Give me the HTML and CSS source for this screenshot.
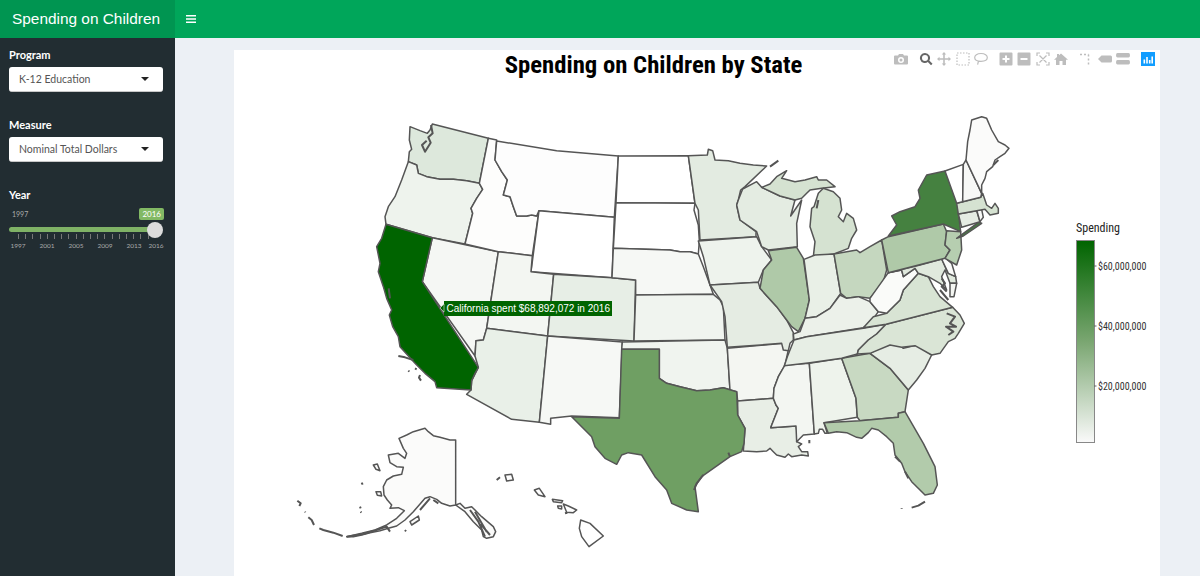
FILE: index.html
```html
<!DOCTYPE html>
<html lang="en">
<head>
    <meta charset="UTF-8">
    <title>Spending on Children</title>
    <link rel="stylesheet" href="styles.css">
</head>
<body>
    <header class="topbar">
        <div class="brand">Spending on Children</div>
        <div class="toggle">
            <svg width="10" height="8" viewBox="0 0 10 8"><path d="M0,0H10V1.6H0ZM0,3.2H10V4.8H0ZM0,6.4H10V8H0Z" fill="#fff"/></svg>
        </div>
    </header>
    <div class="wrap">
        <aside class="sidebar">
            <div class="field">
                <label class="field-label">Program</label>
                <div class="select">K-12 Education<span class="caret"></span></div>
            </div>
            <div class="field">
                <label class="field-label">Measure</label>
                <div class="select">Nominal Total Dollars<span class="caret"></span></div>
            </div>
            <div class="field">
                <label class="field-label">Year</label>
                <div class="slider">
                    <div class="slider-top"><span class="slider-min">1997</span><span class="slider-badge">2016</span></div>
                    <div class="track"><span class="knob"></span></div>
                    <div class="ticks"></div>
                    <div class="tick-labels">
                        <span>1997</span><span>2001</span><span>2005</span><span>2009</span><span>2013</span><span>2016</span>
                    </div>
                </div>
            </div>
        </aside>
        <main class="content">
            <section class="plot">
                <div class="modebar">
                    <div class="mode-group">
                        <svg viewBox="0 0 14 14"><path fill-rule="evenodd" d="M1,3.5H4L5,2H9L10,3.5H13Q14,3.5 14,4.5V11.5Q14,12.5 13,12.5H1Q0,12.5 0,11.5V4.500Q0,3.5 1,3.5ZM7,5A3,3 0 1 0 7,11A3,3 0 1 0 7,5ZM7,6.500A1.500,1.500 0 1 1 7,9.500A1.500,1.500 0 1 1 7,6.500Z"/></svg>
                    </div>
                    <div class="mode-group">
                        <svg class="active" viewBox="0 0 14 14"><path fill-rule="evenodd" d="M6,1A5,5 0 0 1 10.300,8.600L13.500,11.800L12,13.300L8.800,10.100A5,5 0 1 1 6,1ZM6,3A3,3 0 1 0 6,9A3,3 0 1 0 6,3Z"/></svg>
                        <svg viewBox="0 0 14 14"><path d="M7,0L9.200,2.500H7.800V6.200H11.500V4.800L14,7L11.500,9.200V7.800H7.800V11.500H9.200L7,14L4.800,11.500H6.200V7.800H2.500V9.200L0,7L2.500,4.800V6.200H6.200V2.500H4.800Z"/></svg>
                        <svg viewBox="0 0 14 14"><rect class="dash" x="1" y="1" width="12" height="12"/></svg>
                        <svg viewBox="0 0 14 14"><path class="line" d="M7,1.500C11,1.500 13.300,3.200 13.300,5.500C13.300,7.800 10.500,9.300 7,9.300C3.500,9.300 .7,7.800 .7,5.500C.7,3.200 3,1.500 7,1.500ZM4.500,9L3.600,12.600"/></svg>
                    </div>
                    <div class="mode-group">
                        <svg viewBox="0 0 14 14"><path fill-rule="evenodd" d="M1.500,.5H12.500Q13.500,.5 13.500,1.500V12.500Q13.500,13.500 12.500,13.500H1.500Q.5,13.500 .5,12.500V1.500Q.5,.5 1.500,.5ZM6,3.500V6H3.500V8H6V10.500H8V8H10.500V6H8V3.500Z"/></svg>
                        <svg viewBox="0 0 14 14"><path fill-rule="evenodd" d="M1.500,.5H12.500Q13.500,.5 13.500,1.500V12.500Q13.500,13.500 12.500,13.500H1.500Q.5,13.500 .5,12.500V1.500Q.5,.5 1.500,.5ZM3.500,6V8H10.500V6Z"/></svg>
                        <svg viewBox="0 0 14 14"><path class="line" d="M1,4V1H4M10,1H13V4M13,10V13H10M4,13H1V10M3.500,3.500L10.500,10.500M10.500,3.500L3.500,10.500"/></svg>
                        <svg viewBox="0 0 14 14"><path d="M7,1.500L14,7.800H12V13H8.500V9H5.500V13H2V7.800H0L3,5.100V2H5V3.300Z"/></svg>
                    </div>
                    <div class="mode-group">
                        <svg viewBox="0 0 14 14"><path class="spike" d="M1,2.500H9.500M9.500,2.500V13"/></svg>
                        <svg viewBox="0 0 14 14"><path d="M0,7L3.500,3.500H12.500Q14,3.500 14,5V9Q14,10.500 12.500,10.500H3.500Z"/></svg>
                        <svg viewBox="0 0 14 14"><path d="M1.500,1H12.500Q14,1 14,3.200Q14,5.500 12.500,5.500H1.500Q0,5.500 0,3.200Q0,1 1.500,1ZM1.500,8H12.500Q14,8 14,10.300Q14,12.500 12.500,12.500H1.500Q0,12.500 0,10.300Q0,8 1.500,8Z"/></svg>
                    </div>
                    <div class="mode-group">
                        <svg viewBox="0 0 14 14"><rect width="14" height="14" fill="#119dff"/><path d="M2.500,7.500h1.600v4h-1.600zM5.200,5h1.600v6.500h-1.600zM7.900,8h1.600v3.500h-1.600zM10.400,4.500h1.600v7h-1.600z" fill="#fff"/></svg>
                    </div>
                </div>
                <h1 class="plot-title">Spending on Children by State</h1>
                <svg class="map" width="926" height="496" viewBox="234 80 926 496">
                    <!-- west and plains, coordinates from origin 370,110 at 3x -->
                    <g class="states" transform="translate(370 110) scale(.33333)">
                        <path fill="#dde8dc" d="M187,42L355,85L328,220L290,212L250,208L210,208L170,200L145,190L140,165L115,155L118,125L125,118L118,90L120,50L150,62L172,70L180,60Z"/>
                        <path class="dark" d="M183,45L188,70L175,82L182,98L165,125L156,105L170,92"/>
                        <path fill="#eef3ed" d="M115,155L140,165L145,190L170,200L210,208L250,208L290,212L328,220L338,238L320,265L303,295L308,310L285,402L187,383L48,343L45,320L55,290L75,260L95,210Z"/>
                        <path fill="#f5f7f4" d="M187,383L385,425L350,655L340,690L318,692L315,738L157,515Z"/>
                        <path fill="#fdfdfc" d="M355,85L380,90L375,150L395,185L412,210L400,255L420,260L430,290L440,318L470,318L485,315L500,318L507,302L487,437L385,425L285,402L308,310L303,295L320,265L338,238L328,220Z"/>
                        <path fill="#fdfdfd" d="M380,93L560,122L745,138L733,322L507,302L500,318L485,315L470,318L440,318L430,290L420,260L400,255L412,210L395,185L375,150Z"/>
                        <path fill="#ffffff" d="M507,302L733,322L726,503L483,485Z"/>
                        <path fill="#f3f6f2" d="M385,425L487,437L483,485L551,493L533,678L350,655Z"/>
                        <path fill="#e7eee6" d="M551,493L726,503L797,510L792,693L533,678Z"/>
                        <path fill="#e9f0e8" d="M350,655L533,678L508,937L425,928L290,853L303,840L305,812L325,772L315,738L318,692L340,690Z"/>
                        <path fill="#f6f8f5" d="M533,678L757,696L748,923L605,918L542,925L542,943L508,937Z"/>
                        <path fill="#ffffff" d="M745,138L955,137L975,280L738,278Z"/>
                        <path fill="#ffffff" d="M738,278L975,280L972,300L985,345L988,393L985,432L960,425L930,425L900,420L730,415Z"/>
                        <path fill="#f6f8f5" d="M730,415L900,420L930,425L960,425L985,432L1000,470L1020,525L1030,553L797,555L797,510L726,503Z"/>
                        <path fill="#f0f4ef" d="M797,555L1030,553L1050,570L1060,590L1065,690L792,693Z"/>
                        <path fill="#006400" d="M48,343L187,383L157,515L325,772L315,790L305,812L303,840L200,833L195,815L165,790L135,760L90,710L85,680L68,650L58,615L65,600L50,565L40,530L25,485L30,460L20,410L35,385Z"/>
                        <path class="dark" d="M85,738L105,742L130,750M115,782L118,785M135,775L140,778M150,795L147,803L153,812M56,535L60,565"/>
                    </g>
                    <!-- south, coordinates from origin 570,340 at 3x -->
                    <g class="states" transform="translate(570 340) scale(.33333)">
                        <path fill="#f0f4ef" d="M157,6L465,0L472,25L480,150L460,143L420,150L380,152L330,140L290,130L268,115L268,28L155,28Z"/>
                        <path fill="#f4f6f2" d="M472,25L640,10L655,30L645,75L625,110L612,145L610,175L503,183L500,155L480,150Z"/>
                        <path fill="#e8eee6" d="M503,183L610,175L618,195L625,205L602,263L678,258L682,280L680,305L695,312L685,320L695,335L713,335L715,348L695,345L665,350L655,342L645,352L620,345L610,335L600,325L590,333L560,335L520,333L525,265L503,225Z"/>
                        <path fill="#f3f6f2" d="M645,75L718,70L733,282L700,285L680,305L678,258L602,263L625,205L618,195L610,175L612,145L625,110Z"/>
                        <path fill="#eef3ec" d="M718,70L815,55L858,175L862,232L762,248L772,280L765,280L758,268L748,268L745,280L733,282Z"/>
                        <path fill="#c8d9c2" d="M815,55L900,40L960,85L1015,150L1005,215L985,220L985,232L870,242L862,232L858,175Z"/>
                        <path fill="#e6ede4" d="M900,40L940,18L985,12L1000,25L1040,15L1085,45L1065,85L1040,120L1015,150L960,85Z"/>
                        <path fill="#b2cbab" d="M762,248L870,242L985,232L985,220L1005,215L1060,310L1095,380L1102,435L1090,460L1065,465L1050,450L1025,425L1005,395L995,370L975,345L970,310L950,290L925,270L905,265L895,278L875,295L860,292L830,278L800,275L775,280Z"/>
                        <path fill="#6f9f63" d="M155,28L268,28L268,115L290,130L330,140L380,152L420,150L460,143L500,155L503,225L525,265L522,310L515,335L480,350L430,385L395,410L375,440L385,515L350,510L305,490L290,450L255,410L215,345L175,338L155,345L140,373L105,355L75,320L65,290L5,230L148,235Z"/>
                        <path class="dark" d="M1025,503L1045,497L1065,485M995,505L995,507M718,300L718,310M975,350L990,365M1005,395L1015,415M475,338L480,350M400,405L380,430L372,450"/>
                    </g>
                    <!-- midwest and east, coordinates from origin 670,110 at 3x -->
                    <g class="states" transform="translate(670 110) scale(.33333)">
                        <path fill="#e3ebe1" d="M55,137L112,135L115,118L128,122L135,150L175,152L210,160L250,165L290,168L225,230L212,240L205,270L200,285L210,330L258,365L258,380L90,390L85,300L75,280Z"/>
                        <path fill="#eef3ed" d="M85,393L260,380L275,410L305,450L280,480L265,517L120,525L100,440Z"/>
                        <path fill="#e5ece3" d="M120,525L265,517L270,535L320,590L350,630L370,668L370,690L360,700L355,722L340,720L335,700L172,712L165,620L155,575Z"/>
                        <path fill="#e4ece2" d="M218,237L260,215L275,232L330,258L375,270L362,318L395,270L380,340L382,410L295,420L275,410L260,365L210,330L200,285L205,270Z"/>
                        <path fill="#d5e2d1" d="M275,232L300,222L320,200L350,182L335,205L375,215L405,210L440,200L445,210L470,210L495,230L455,235L420,240L395,265L375,270L330,258Z"/>
                        <path fill="#d5e2d1" d="M425,295L432,290L445,250L460,235L490,245L510,265L515,300L505,320L520,335L530,310L550,325L560,360L545,385L535,415L492,432L430,440L435,395L420,350Z"/>
                        <path fill="#afc9a8" d="M295,422L380,412L400,445L418,570L405,625L385,665L365,650L350,630L320,590L270,535L280,480L305,450Z"/>
                        <path fill="#e9f0e7" d="M402,448L435,435L492,432L512,550L480,595L440,620L405,625L418,570Z"/>
                        <path fill="#c5d7bf" d="M492,432L560,420L570,428L600,410L635,390L650,480L640,515L600,565L565,560L530,565L512,550Z"/>
                        <path fill="#ecf1ea" d="M372,690L370,672L390,665L405,625L440,620L480,595L510,555L530,565L565,560L600,575L625,605L600,640L580,653L410,680Z"/>
                        <path fill="#e7eee5" d="M372,690L410,680L580,655L648,643L620,672L595,690L565,720L562,732L515,745L420,758L343,767L352,740L360,720Z"/>
                        <path fill="#dae5d6" d="M648,643L848,592L870,615L883,640L865,670L855,685L835,695L810,730L785,735L735,707L695,712L660,705L600,730L562,732L565,720L595,690L620,672Z"/>
                        <path fill="#d8e4d4" d="M580,653L610,620L650,610L690,570L700,540L745,490L775,500L790,530L810,560L848,592L648,643Z"/>
                        <path fill="#fafbf9" d="M600,565L625,530L655,488L695,480L700,500L735,475L745,490L700,540L690,570L650,610L625,605L600,575Z"/>
                        <path fill="#e0e9dd" d="M655,488L750,465L815,447L835,490L857,500L860,520L840,520L825,480L815,500L830,540L810,520L775,500L745,490L735,475L700,500L695,480Z"/>
                        <path fill="#fafbf9" d="M815,447L825,443L845,460L857,500L835,490Z"/>
                        <path fill="#f4f6f2" d="M840,520L860,520L852,560L840,560Z"/>
                        <path fill="#afc9a8" d="M635,390L655,380L820,342L830,365L825,405L840,420L825,445L655,488Z"/>
                        <path fill="#b6ceb0" d="M830,362L872,365L875,420L860,465L825,445L840,420L825,405Z"/>
                        <path fill="#458140" d="M655,378L680,345L665,318L690,305L735,290L750,265L745,240L770,195L825,183L860,265L872,365L820,342Z"/>
                        <path fill="#458140" d="M860,385L925,337L935,340L880,378Z"/>
                        <path fill="#e5ece3" d="M865,312L920,302L930,335L875,352Z"/>
                        <path fill="#f8f9f7" d="M920,300L935,298L940,322L930,335Z"/>
                        <path fill="#d5e2d1" d="M860,280L932,262L938,250L945,270L950,285L965,295L975,280L985,295L985,310L960,315L945,298L865,312Z"/>
                        <path fill="#ffffff" d="M825,183L880,163L878,275L860,280Z"/>
                        <path fill="#f7f8f6" d="M880,163L888,150L935,250L932,262L878,275Z"/>
                        <path fill="#fbfbfa" d="M888,150L893,95L900,60L905,30L935,20L950,25L965,60L985,95L1005,105L1017,115L1005,130L990,140L975,150L968,170L950,185L945,205L935,225L935,250Z"/>
                        <path class="dark" d="M300,170L325,152M815,505L825,520L815,530L830,545M810,540L835,570M830,610L855,620L840,640L858,650L828,650L850,665L835,675M970,165L985,150M445,270L440,295"/>
                    </g>
                    <!-- alaska and hawaii, coordinates from origin 290,340 at 3x -->
                    <g class="states" transform="translate(290 340) scale(.33333)">
                        <path fill="#fbfbfa" d="M497,495L510,490L525,505L545,500L575,530L610,560L617,575L610,590L590,595L580,590L575,570L550,545L525,515Z"/>
                        <path fill="#fbfbfa" d="M405,265L415,275L430,287L450,292L480,300L497,300L497,495L480,498L455,490L440,478L420,470L405,475L385,498L370,515L345,540L320,558L295,565L270,572L240,578L215,585L190,590L170,590L215,580L255,570L290,555L320,535L343,512L325,503L300,505L305,495L292,480L282,465L280,440L290,420L310,408L335,403L340,382L320,380L300,368L295,345L325,340L345,355L350,340L340,325L327,295L350,285L370,275Z"/>
                        <path fill="#fbfbfa" d="M250,375L262,372L270,392L258,388Z"/>
                        <path fill="#fbfbfa" d="M258,455L272,455L275,468L262,466Z"/>
                        <path fill="#fbfbfa" d="M360,545L385,528L388,540L365,555Z"/>
                        <path class="dark" d="M22,482L32,490L28,498M45,515L46,517M55,532L65,540L72,555M88,565L100,570L130,578L158,588M170,590L220,582L250,573L290,560L300,575M215,428L218,434M210,500L212,505M212,515L214,518M390,510L420,475M430,480L445,490M540,510L565,545L585,590M555,515L590,575M570,550L600,585M345,570L348,574"/>
                        <path fill="#ffffff" d="M872,540L900,550L940,588L897,620L875,590L868,565Z"/>
                        <path fill="#ffffff" d="M820,492L835,498L860,510L850,518L830,517Z"/>
                        <path fill="#ffffff" d="M787,478L818,482L815,488L790,485Z"/>
                        <path fill="#ffffff" d="M803,498L815,498L815,507L805,505Z"/>
                        <path fill="#ffffff" d="M733,450L748,445L765,470L745,465Z"/>
                        <path fill="#ffffff" d="M645,405L665,403L670,420L650,423Z"/>
                        <path class="dark" d="M620,420L630,412M825,520L832,518"/>
                    </g>
                    <g class="hover">
                        <rect x="444" y="301" width="168" height="15" fill="#006400"/>
                        <path d="M444,304L440,308L444,312Z" fill="#006400" stroke="#dfe8dd" stroke-width=".6"/>
                        <text x="446.500" y="311.500">California spent $68,892,072 in 2016</text>
                    </g>
                    <g class="legend">
                        <defs>
                            <linearGradient id="scale" x1="0" y1="0" x2="0" y2="1">
                                <stop offset="0" stop-color="#006400"/>
                                <stop offset=".5" stop-color="#7aa671"/>
                                <stop offset="1" stop-color="#fafafa"/>
                            </linearGradient>
                        </defs>
                        <text class="legend-title" x="1076" y="232">Spending</text>
                        <rect x="1076.500" y="240.500" width="18" height="202" fill="url(#scale)" stroke="#888"/>
                        <path d="M1094,266h2.500M1094,326h2.500M1094,386h2.500" stroke="#666"/>
                        <text x="1098" y="269.500">$60,000,000</text>
                        <text x="1098" y="329.500">$40,000,000</text>
                        <text x="1098" y="389.500">$20,000,000</text>
                    </g>
                </svg>
            </section>
        </main>
    </div>
</body>
</html>
```

FILE: styles.css
```css
* {
    box-sizing: border-box;
}
html, body {
    margin: 0;
    height: 100%;
    overflow: hidden;
}
body {
    display: flex;
    flex-direction: column;
    font-family: "Lato", "Noto Sans", sans-serif;
    background: #ecf0f5;
}

/* top bar */
.topbar {
    display: flex;
    height: 38px;
    background: #00a65a;
    flex-shrink: 0;
}
.brand {
    width: 175px;
    padding-left: 12px;
    background: #009551;
    color: #fff;
    font: 15.400px/38px "Liberation Sans", Arial, sans-serif;
}
.toggle {
    display: flex;
    align-items: center;
    padding-left: 11px;
}

.wrap {
    display: flex;
    flex: 1;
    min-height: 0;
}

/* sidebar */
.sidebar {
    width: 175px;
    flex-shrink: 0;
    padding: 10px 12px 0 9px;
    background: #222d32;
    color: #fff;
}
.field {
    margin-bottom: 26px;
}
.field-label {
    display: block;
    height: 19px;
    font-size: 11px;
    line-height: 13px;
    font-weight: 700;
}
.select {
    display: flex;
    align-items: center;
    justify-content: space-between;
    height: 25px;
    padding: 0 14px 0 10px;
    background: #fff;
    border-radius: 3px;
    border-bottom: 1px solid #c8c8c8;
    color: #555;
    font-size: 10.500px;
}
.caret {
    width: 0;
    height: 0;
    border-left: 4px solid transparent;
    border-right: 4px solid transparent;
    border-top: 4px solid #222;
}
.slider {
    margin-top: 0;
}
.slider-top {
    display: flex;
    justify-content: space-between;
    align-items: center;
    height: 14px;
    font-size: 7px;
    color: #aaa;
}
.slider-min {
    padding-left: 3px;
}
.slider-badge {
    padding: 0 3px;
    margin-right: -1px;
    background: #82b964;
    border-radius: 2px;
    color: #fff;
    font-size: 8px;
    line-height: 12px;
}
.track {
    position: relative;
    height: 5px;
    margin-top: 6px;
    width: 146px;
    background: #7fb266;
    border-radius: 3px;
}
.knob {
    position: absolute;
    right: -8px;
    top: -5.500px;
    width: 16px;
    height: 16px;
    border-radius: 50%;
    background: #dcdcdc;
}
.ticks {
    height: 5px;
    margin: 2px 0 0 9px;
    width: 137px;
    background: repeating-linear-gradient(90deg, #777 0 1px, transparent 1px 7.200px);
}
.tick-labels {
    display: flex;
    margin: 3px 0 0 -5.500px;
    font-size: 6.500px;
    color: #aaa;
}
.tick-labels span {
    flex: 0 0 29px;
    text-align: center;
}
.tick-labels span:last-child {
    flex-basis: 13px;
    white-space: nowrap;
}

/* plot area */
.content {
    flex: 1;
    min-width: 0;
    padding: 12px 40px 0 59px;
}
.plot {
    position: relative;
    height: 100%;
    background: #fff;
}
.plot-title {
    height: 30px;
    margin: 0;
    padding-right: 87px;
    text-align: center;
    font: 700 24.700px/29px "Roboto Condensed", "Liberation Sans Narrow", Roboto, sans-serif;
    color: #000;
}
.modebar {
    position: absolute;
    top: 2px;
    right: 5px;
    display: flex;
    gap: 11px;
}
.mode-group {
    display: flex;
    gap: 4.400px;
}
.modebar svg {
    display: block;
    width: 14px;
    height: 14px;
    fill: #bdbdbd;
}
.modebar svg.active {
    fill: #666;
}
.modebar .line, .modebar .dash, .modebar .spike {
    fill: none;
    stroke: #bdbdbd;
    stroke-width: 1.200;
}
.modebar .dash {
    stroke-dasharray: 1.500 1.500;
}
.modebar .spike {
    stroke-dasharray: 2 2;
    stroke-width: 1.500;
}

.map {
    display: block;
}
.states path {
    stroke: #555;
    stroke-width: 1.500px;
    stroke-linejoin: round;
    vector-effect: non-scaling-stroke;
}
.states .dark {
    fill: none;
    stroke-width: 2px;
}
.hover text {
    font: 10px "Liberation Sans", Arial, sans-serif;
    fill: #fff;
}
.legend text {
    font: 10px "Roboto Condensed", "Liberation Sans Narrow", Roboto, sans-serif;
    fill: #333;
}
.legend .legend-title {
    font-size: 12px;
    fill: #222;
}
```
